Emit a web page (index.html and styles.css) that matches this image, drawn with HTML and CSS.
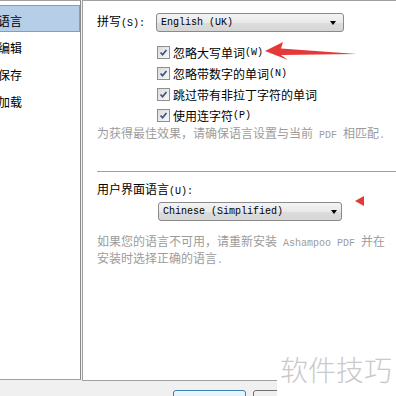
FILE: index.html
```html
<!DOCTYPE html>
<html lang="zh-CN">
<head>
    <meta charset="UTF-8">
    <title>选项 - 语言</title>
    <link rel="stylesheet" href="styles.css">
</head>
<body>

    <div class="dialog">
        <div class="panes">

            <!-- 左侧分类列表 -->
            <ul class="nav">
                <li class="nav-item is-selected">语言</li>
                <li class="nav-item">编辑</li>
                <li class="nav-item">保存</li>
                <li class="nav-item">加载</li>
            </ul>

            <!-- 语言设置页 -->
            <div class="page">
                <div class="field">
                    <span class="field-label">拼写<span class="lat">(S):</span></span>
                    <div class="combo">
                        <span class="combo-text">English (UK)</span>
                        <span class="combo-arrow"></span>
                    </div>
                </div>

                <ul class="checks">
                    <li class="check-row">
                        <span class="checkbox"><svg viewBox="0 0 13 13"><path d="M3 6.5 L5.4 9.2 L10 3.6"/></svg></span>
                        忽略大写单词<span class="lat">(W)</span>
                    </li>
                    <li class="check-row">
                        <span class="checkbox"><svg viewBox="0 0 13 13"><path d="M3 6.5 L5.4 9.2 L10 3.6"/></svg></span>
                        忽略带数字的单词<span class="lat">(N)</span>
                    </li>
                    <li class="check-row">
                        <span class="checkbox"><svg viewBox="0 0 13 13"><path d="M3 6.5 L5.4 9.2 L10 3.6"/></svg></span>
                        跳过带有非拉丁字符的单词
                    </li>
                    <li class="check-row">
                        <span class="checkbox"><svg viewBox="0 0 13 13"><path d="M3 6.5 L5.4 9.2 L10 3.6"/></svg></span>
                        使用连字符<span class="lat">(P)</span>
                    </li>
                </ul>

                <p class="note">为获得最佳效果，请确保语言设置与当前<span class="lat"> PDF </span>相匹配<span class="lat">.</span></p>

                <hr class="divider">

                <div class="section-label">用户界面语言<span class="lat">(U):</span></div>
                <div class="combo combo-ui">
                    <span class="combo-text">Chinese (Simplified)</span>
                    <span class="combo-arrow"></span>
                </div>

                <p class="note note-ui">如果您的语言不可用，请重新安装<span class="lat"> Ashampoo PDF </span>并在安装时选择正确的语言<span class="lat">.</span></p>
            </div>
        </div>

        <div class="buttons">
            <button class="btn btn-default">确定</button>
            <button class="btn">取消</button>
        </div>
    </div>

    <!-- 截图上的红色标注 -->
    <svg class="annot" viewBox="0 0 396 396" width="396" height="396">
        <path d="M265 51 L283 42 L281 48.5 L357 54 L281 55 L288 60 Z" fill="#e53838"/>
        <path d="M355 201 L364 196 L364 206 Z" fill="#e53838"/>
    </svg>

    <div class="watermark">软件技巧</div>

</body>
</html>
```

FILE: styles.css
```css
:root {
    --face: #f0f0f0;
    --frame: #a0a0a0;
    --text: #000;
    --text-muted: #9c9c9c;
    --select-bg: #b6cee8;
    --select-border: #7d9fcb;
    --cjk: "Noto Sans CJK SC", "Noto Sans", sans-serif;
    --mono: "Liberation Mono", "DejaVu Sans Mono", monospace;
}

html, body {
    margin: 0;
    padding: 0;
}

body {
    width: 396px;
    height: 396px;
    overflow: hidden;
    position: relative;
    background: var(--face);
    font-family: var(--cjk);
    font-size: 12px;
    color: var(--text);
}

.lat {
    font-family: var(--mono);
    font-size: 10px;
    white-space: pre;
}

.dialog {
    display: flex;
    flex-direction: column;
}

.panes {
    display: flex;
    align-items: flex-start;
    height: 381px;
}

/* 左侧列表 */
.nav {
    list-style: none;
    margin: 0;
    padding: 4px 0 0 0;
    box-sizing: border-box;
    width: 81px;
    height: 380px;
    flex: none;
    background: #fff;
    border-top: 1px solid var(--frame);
    border-right: 1px solid #8a8a8a;
    border-bottom: 1px solid var(--frame);
    overflow: hidden;
}

.nav-item {
    height: 27px;
    box-sizing: border-box;
    margin-left: -6px;
    padding: 2px 0 0 3px;
    line-height: 25px;
    border: 1px solid transparent;
}

.nav-item.is-selected {
    background: var(--select-bg);
    border-color: var(--select-border);
}

/* 右侧设置页 */
.page {
    flex: none;
    width: 330px;
    height: 381px;
    box-sizing: border-box;
    margin-left: 1px;
    padding: 12px 0 0 14px;
    background: #fff;
    border-top: 1px solid var(--frame);
    border-left: 1px solid var(--frame);
    border-bottom: 1px solid var(--frame);
}

.field {
    display: flex;
    align-items: center;
    height: 19px;
}

.field-label {
    width: 59px;
    flex: none;
    position: relative;
    top: -2px;
}

.combo {
    width: 188px;
    height: 19px;
    box-sizing: border-box;
    display: flex;
    align-items: center;
    justify-content: space-between;
    padding: 0 7px 0 4px;
    border: 1px solid #8a8a8a;
    border-radius: 3px;
    background: linear-gradient(#f4f4f4, #e9e9e9 50%, #dcdcdc 51%, #d6d6d6);
}

.combo-text {
    font-family: var(--mono);
    font-size: 10px;
    white-space: pre;
}

.combo-arrow {
    width: 0;
    height: 0;
    border-left: 3.5px solid transparent;
    border-right: 3.5px solid transparent;
    border-top: 4px solid #000;
}

.checks {
    list-style: none;
    margin: 10px 0 0 60px;
    padding: 0;
}

.check-row {
    display: flex;
    align-items: center;
    height: 21px;
    white-space: nowrap;
}

.checkbox {
    width: 13px;
    height: 13px;
    box-sizing: border-box;
    margin-right: 3px;
    border: 1px solid #8e8f8f;
    background: linear-gradient(135deg, #dcdcdc, #f8f8f8);
    display: flex;
}

.checkbox svg {
    width: 11px;
    height: 11px;
}

.checkbox path {
    fill: none;
    stroke: #3d5283;
    stroke-width: 2;
}

.note {
    margin: 0;
    width: 292px;
    line-height: 14px;
    color: var(--text-muted);
}

.divider {
    margin: 28px 0 0 0;
    border: 0;
    border-top: 1px solid var(--frame);
    border-bottom: 1px solid #fff;
}

.section-label {
    margin-top: 9px;
    line-height: 14px;
}

.combo-ui {
    width: 184px;
    margin: 3px 0 0 61px;
    padding-right: 4px;
}

.note-ui {
    margin-top: 13px;
    line-height: 14px;
}

/* 底部按钮 */
.buttons {
    display: flex;
    gap: 7px;
    padding: 9px 0 0 173px;
}

.btn {
    width: 73px;
    height: 23px;
    padding: 2px 0 0 0;
    font-family: var(--cjk);
    font-size: 12px;
    line-height: 14px;
    color: #000;
    border: 1px solid #707070;
    border-radius: 3px;
    background: linear-gradient(#f2f2f2, #ebebeb 50%, #dddddd 51%, #cfcfcf);
}

.btn-default {
    border-color: #3c7fb1;
    background: linear-gradient(#eaf6fd, #d9f0fc 50%, #bee6fd 51%, #a7d9f5);
}

/* 标注与水印 */
.annot {
    position: absolute;
    top: 0;
    left: 0;
    pointer-events: none;
}

.watermark {
    position: absolute;
    left: 277px;
    top: 345px;
    width: 119px;
    height: 51px;
    box-sizing: border-box;
    padding-left: 3px;
    background: #fff;
    font-size: 28px;
    line-height: 48px;
    font-weight: 300;
    color: #c9c9c9;
    white-space: nowrap;
}
```
